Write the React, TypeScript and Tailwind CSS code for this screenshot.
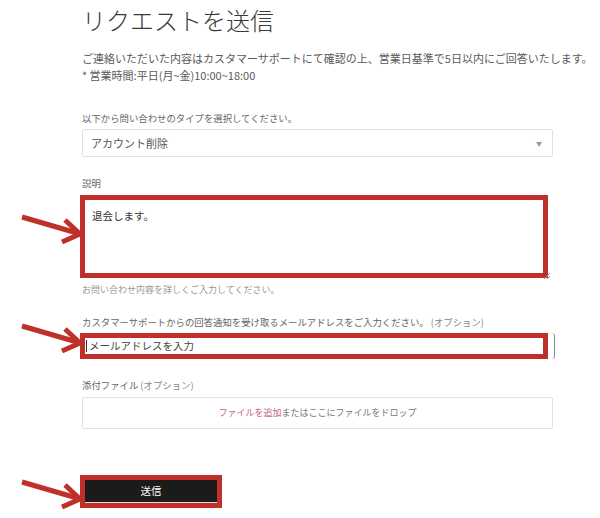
import React from "react"

function Arrow({ top }: { top: string }) {
  return (
    <svg
      className={`absolute left-[18px] ${top} w-[70px] h-[36px]`}
      viewBox="0 0 70 36"
      fill="none"
      stroke="#c0302b"
      strokeWidth={5}
    >
      <path d="M4 7 L59 23" />
      <path d="M47 10 L62 24 L44 32" strokeLinejoin="miter" />
    </svg>
  )
}

export default function App() {
  return (
    <div className="relative w-[600px] h-[518px] overflow-hidden bg-white font-['Noto_Sans_CJK_JP','Noto_Sans',sans-serif]">
      <div className="ml-[82px] w-[471px] flex flex-col">
        {/* title */}
        <h1 className="mt-[6px] text-[24px] leading-[28px] font-light text-[#3a3a3a]">リクエストを送信</h1>

        <p className="mt-[16px] text-[11px] leading-[17px] text-[#5a5a5a] whitespace-nowrap">
          ご連絡いただいた内容はカスタマーサポートにて確認の上、営業日基準で5日以内にご回答いたします。
          <br />* 営業時間:平日(月~金)10:00~18:00
        </p>

        {/* type select */}
        <label className="mt-[27px] text-[9.4px] leading-[14px] text-[#666]">以下から問い合わせのタイプを選択してください。</label>
        <div className="mt-[4px] h-[28px] flex items-center justify-between border border-[#e2e2e2] rounded-[2px] pl-[8px] pr-[10px]">
          <span className="text-[11px] text-[#555]">アカウント削除</span>
          <span className="text-[6px] text-[#999]">▼</span>
        </div>

        {/* description */}
        <label className="mt-[19px] text-[9.4px] leading-[14px] text-[#666]">説明</label>
        <div className="relative mt-[5px] -ml-[2px] w-[468px] h-[83px] border-[5px] border-[#c0302b] pl-[7px] pt-[1px]">
          <span className="text-[10.5px] leading-[14px] text-[#333]">退会します。</span>
          <svg className="absolute -right-[7px] -bottom-[6px] w-[7px] h-[7px]" viewBox="0 0 7 7" stroke="#999" strokeWidth={1}>
            <path d="M1 7 L7 1 M4 7 L7 4" />
          </svg>
        </div>
        <p className="mt-[5px] text-[9px] leading-[14px] text-[#999]">お問い合わせ内容を詳しくご入力してください。</p>

        {/* email */}
        <label className="mt-[18px] text-[9.4px] leading-[14px] text-[#666] whitespace-nowrap">
          カスタマーサポートからの回答通知を受け取るメールアドレスをご入力ください。 <span className="text-[#888]">(オプション)</span>
        </label>
        <div className="relative mt-[4px] -ml-[2px] w-[475px] h-[26px] rounded-r-[3px] border-r border-[#888]">
          <div className="w-[468px] h-[26px] border-[5px] border-[#c0302b] flex items-center pl-[1px]">
            <span className="w-[1px] h-[12px] bg-[#333] mr-[2px]" />
            <span className="text-[10.5px] text-[#444]">メールアドレスを入力</span>
          </div>
        </div>

        {/* attachment */}
        <label className="mt-[19px] text-[9.4px] leading-[14px] text-[#666]">
          添付ファイル <span className="text-[#888]">(オプション)</span>
        </label>
        <div className="mt-[5px] h-[32px] flex items-center justify-center border border-[#e2e2e2] rounded-[2px] text-[9px] text-[#777]">
          <span className="text-[#c8607a]">ファイルを追加</span>またはここにファイルをドロップ
        </div>

        {/* submit */}
        <div className="mt-[46px] -ml-[2px] w-[142px] h-[33px] border-[5px] border-[#c0302b]">
          <button className="w-full h-full bg-[#1b1b1b] border-b border-[#ddd] text-white text-[10.5px] flex items-center justify-center">
            送信
          </button>
        </div>
      </div>

      <Arrow top="top-[210px]" />
      <Arrow top="top-[319px]" />
      <Arrow top="top-[475px]" />
    </div>
  )
}
